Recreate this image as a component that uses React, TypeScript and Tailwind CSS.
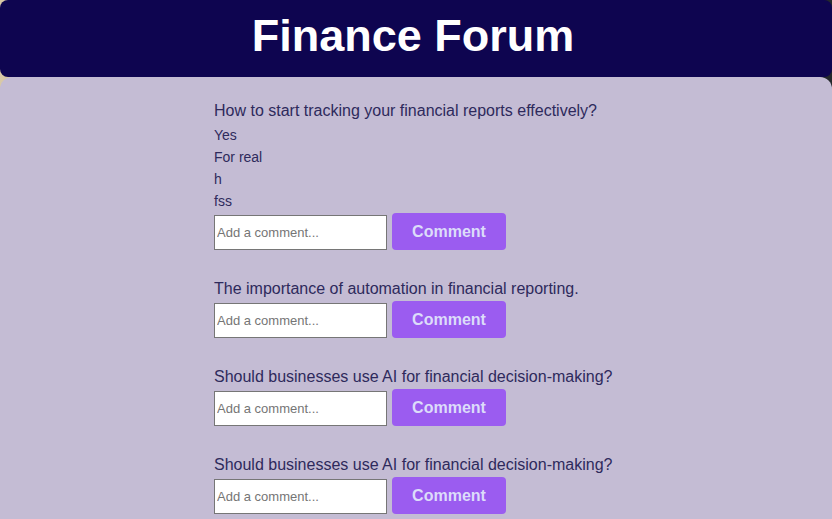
const posts = [
  {
    title: "How to start tracking your financial reports effectively?",
    comments: ["Yes", "For real", "h", "fss"],
  },
  { title: "The importance of automation in financial reporting.", comments: [] },
  { title: "Should businesses use AI for financial decision-making?", comments: [] },
  { title: "Should businesses use AI for financial decision-making?", comments: [] },
];

function Post({ title, comments }: { title: string; comments: string[] }) {
  return (
    <div className="mb-[28px]">
      <h3 className="text-[16px] leading-[22px] text-[#2e2a5c] mb-[1px]">{title}</h3>
      {comments.length > 0 && (
        <div className="mt-[2px]">
          {comments.map((c, i) => (
            <p key={i} className="text-[14px] leading-[22px] text-[#2e2a5c]">
              {c}
            </p>
          ))}
        </div>
      )}
      <div className="flex items-end gap-[5px] mt-[1px]">
        <input
          type="text"
          placeholder="Add a comment..."
          className="w-[173px] h-[35px] bg-white border border-[#767676] px-[2px] text-[13px] text-black placeholder:text-[#757575] outline-none"
        />
        <button className="w-[114px] h-[37px] rounded-[4px] bg-[#9b5cf0] text-[#dcdcfa] font-bold text-[16px]">
          Comment
        </button>
      </div>
    </div>
  );
}

export default function App() {
  return (
    <div
      className="min-h-screen bg-gradient-to-r from-[#d9c9a6] via-[#3a3a44] to-[#24282c] flex flex-col"
      style={{ fontFamily: '"Liberation Sans", Arial, sans-serif' }}
    >
      <header className="h-[77px] bg-[#0e0550] rounded-[8px] flex items-center justify-center">
        <h1 className="text-white font-bold text-[45px] leading-none mb-[6px] mr-[6px]">Finance Forum</h1>
      </header>
      <main className="flex-1 bg-[#c4bcd4] rounded-t-[12px] pt-[23px]">
        <div className="w-[404px] mx-auto">
          {posts.map((p, i) => (
            <Post key={i} title={p.title} comments={p.comments} />
          ))}
        </div>
      </main>
    </div>
  );
}
